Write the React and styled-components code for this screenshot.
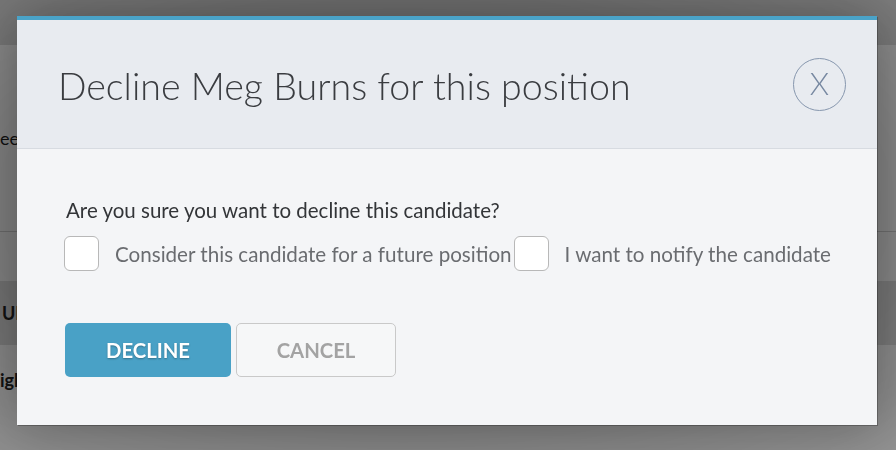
import React from "react";
import styled, { createGlobalStyle } from "styled-components";

const GlobalStyle = createGlobalStyle`
  html, body {
    margin: 0;
    padding: 0;
    background: #ffffff;
    font-family: "Lato", "Open Sans", sans-serif;
  }
  * { box-sizing: border-box; }
`;

const Page = styled.div`
  width: 896px;
  height: 450px;
  overflow: hidden;
  background: #fafafa;
  color: #222;
`;

const TopBar = styled.div`
  height: 45px;
  background: #dadada;
`;

const Row = styled.div`
  display: flex;
  align-items: center;
  height: ${(p) => p.h}px;
  background: ${(p) => (p.shade ? "#dcdcdc" : "transparent")};
  border-bottom: ${(p) => (p.line ? "1px solid #cfcfcf" : "none")};
  font-size: 18px;
  font-weight: ${(p) => (p.bold ? 700 : 400)};
  padding-left: ${(p) => p.indent || 0}px;
`;

const Overlay = styled.div`
  position: fixed;
  inset: 0;
  background: radial-gradient(
    ellipse at 45% 45%,
    rgba(0, 0, 0, 0.58) 0%,
    rgba(0, 0, 0, 0.5) 60%,
    rgba(0, 0, 0, 0.42) 100%
  );
  display: flex;
  align-items: flex-start;
  padding: 16px 0 0 17px;
`;

const Modal = styled.div`
  width: 860px;
  border-top: 4px solid #4aa3c8;
  background: #f4f5f7;
  box-shadow: 0 0 50px rgba(0, 0, 0, 0.3), 1px 1px 0 rgba(0, 0, 0, 0.25);
`;

const Header = styled.div`
  height: 129px;
  background: #e8ebf0;
  border-bottom: 1px solid #d7dbe1;
  display: flex;
  align-items: center;
  justify-content: space-between;
  padding: 0 31px 0 41px;
`;

const Title = styled.h2`
  margin: 0;
  font-family: "Lato", sans-serif;
  font-weight: 300;
  font-size: 37.6px;
  color: #3a3c40;
  padding-top: 3px;
`;

const CloseButton = styled.button`
  width: 53px;
  height: 53px;
  border-radius: 50%;
  border: 1px solid #8797ae;
  background: transparent;
  color: #7788a1;
  font-family: "Lato", sans-serif;
  font-weight: 300;
  font-size: 31px;
  line-height: 1;
  display: flex;
  align-items: center;
  justify-content: center;
  padding: 0 0 1px 0;
  cursor: pointer;
`;

const Body = styled.div`
  padding: 49px 47px 48px 47px;
`;

const Question = styled.p`
  margin: 0 0 14px 0;
  padding-left: 2px;
  font-size: 20.5px;
  line-height: 24px;
  color: #333538;
`;

const Options = styled.div`
  display: flex;
  align-items: center;
  white-space: nowrap;
`;

const Option = styled.label`
  display: flex;
  align-items: center;
  flex-shrink: 0;
  gap: 16px;
  font-size: 20.6px;
  color: #6a6c70;
  white-space: nowrap;
  cursor: pointer;
  & + & {
    margin-left: 2px;
  }
`;

const Box = styled.span`
  width: 35px;
  height: 35px;
  border: 1.5px solid #b8b8b8;
  border-radius: 6px;
  background: #ffffff;
  flex-shrink: 0;
`;

const Actions = styled.div`
  display: flex;
  gap: 5px;
  margin-top: 52px;
  padding-left: 1px;
`;

const Button = styled.button`
  width: ${(p) => (p.primary ? 166 : 160)}px;
  height: 54px;
  border-radius: 5px;
  font-family: "Lato", sans-serif;
  font-weight: 700;
  font-size: 20.3px;
  cursor: pointer;
  background: ${(p) => (p.primary ? "#49a1c6" : "#f6f7f8")};
  color: ${(p) => (p.primary ? "#ffffff" : "#a3a3a3")};
  border: ${(p) => (p.primary ? "none" : "1.5px solid #c9c9c9")};
  text-shadow: ${(p) => (p.primary ? "0 1px 2px rgba(0,0,0,0.3)" : "none")};
`;

export default function App() {
  return (
    <>
      <GlobalStyle />
      <Page>
        <TopBar />
        <Row h={187} line>
          eeting
        </Row>
        <Row h={49} />
        <Row h={64} shade bold indent={2}>
          UI
        </Row>
        <Row h={70} bold>
          igh
        </Row>
      </Page>
      <Overlay>
        <Modal>
          <Header>
            <Title>Decline Meg Burns for this position</Title>
            <CloseButton aria-label="Close">X</CloseButton>
          </Header>
          <Body>
            <Question>Are you sure you want to decline this candidate?</Question>
            <Options>
              <Option>
                <Box />
                Consider this candidate for a future position
              </Option>
              <Option>
                <Box />
                I want to notify the candidate
              </Option>
            </Options>
            <Actions>
              <Button primary>DECLINE</Button>
              <Button>CANCEL</Button>
            </Actions>
          </Body>
        </Modal>
      </Overlay>
    </>
  );
}
